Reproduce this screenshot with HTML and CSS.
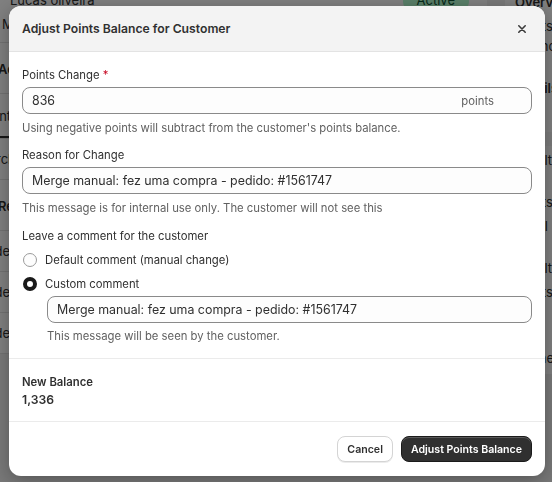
FILE: index.html
```html
<!DOCTYPE html>
<html lang="en">
<head>
  <meta charset="UTF-8">
  <meta name="viewport" content="width=device-width, initial-scale=1.0">
  <title>Adjust Points Balance</title>
  <link rel="stylesheet" href="styles.css">
</head>
<body>

<div class="page">
  <main class="main-col">
    <div class="card customer-card">
      <div class="customer-head">
        <div class="customer-name">Lucas oliveira <span class="badge">Active</span></div>
        <div class="customer-sub">Member since 2023</div>
      </div>
      <div class="row row-strong">Activity</div>
      <div class="tabs"><span class="tab tab-on">Points</span><span class="tab">Orders</span></div>
      <div class="row">Purchase in store</div>
      <div class="row row-strong">Reward</div>
      <div class="row">Order</div>
      <div class="row">Order</div>
      <div class="row">Order</div>
    </div>
  </main>

  <aside class="side-col">
    <div class="card side-card">
      <div class="side-title">Overview</div>
      <div class="side-line">Points balance</div>
      <div class="side-title side-gap">Details</div>
      <div class="side-line">Tier</div>
      <div class="side-band"></div>
      <div class="side-line">Loyalty</div>
      <div class="side-line side-gap">Points</div>
      <div class="side-line">Email</div>
      <div class="side-line side-gap">Loyalty</div>
      <div class="side-line">Points</div>
      <div class="side-line side-gap">Tier</div>
      <div class="side-line">Phone</div>
    </div>
  </aside>
</div>

<div class="backdrop"></div>

<div class="modal">
  <div class="modal-header">
    <h2 class="modal-title">Adjust Points Balance for Customer</h2>
    <button class="close-btn" aria-label="Close">
      <svg width="12" height="12" viewBox="0 0 12 12"><path d="M2.8 2.8l6.4 6.4M9.2 2.8l-6.4 6.4" stroke="#3a3a3a" stroke-width="1.6" stroke-linecap="round"/></svg>
    </button>
  </div>

  <div class="modal-body">
    <div class="field">
      <label class="field-label">Points Change <span class="req">*</span></label>
      <div class="input has-suffix">
        <span class="input-value">836</span>
        <span class="input-suffix">points</span>
      </div>
      <p class="help">Using negative points will subtract from the customer's points balance.</p>
    </div>

    <div class="field">
      <label class="field-label">Reason for Change</label>
      <div class="input"><span class="input-value">Merge manual: fez uma compra - pedido: #1561747</span></div>
      <p class="help">This message is for internal use only. The customer will not see this</p>
    </div>

    <div class="field">
      <label class="field-label">Leave a comment for the customer</label>
      <div class="radio-row">
        <span class="radio"></span>
        <span>Default comment (manual change)</span>
      </div>
      <div class="radio-row">
        <span class="radio radio-on"></span>
        <span>Custom comment</span>
      </div>
      <div class="nested">
        <div class="input"><span class="input-value">Merge manual: fez uma compra - pedido: #1561747</span></div>
        <p class="help help-tight">This message will be seen by the customer.</p>
      </div>
    </div>
  </div>

  <div class="modal-section">
    <div class="balance-label">New Balance</div>
    <div class="balance-value">1,336</div>
  </div>

  <div class="modal-footer">
    <button class="btn">Cancel</button>
    <button class="btn btn-primary">Adjust Points Balance</button>
  </div>
</div>

</body>
</html>
```

FILE: styles.css
```css
body {
  margin: 0;
  background-color: #f1f1f1;
  font-family: Inter, "Noto Sans", sans-serif;
  font-size: 11.3px;
  color: #303030;
  overflow: hidden;
  height: 482px;
}

/* page behind the dialog */
.page {
  display: grid;
  grid-template-columns: 487px 1fr;
  gap: 18px;
  margin-top: -14px;
  font-size: 13px;
}

.card {
  background-color: #fff;
}

.customer-card {
  margin-left: -20px;
}

.customer-head {
  padding: 4px 8px 8px 22px;
  border-bottom: 1px solid #e3e3e3;
}

.customer-name {
  display: flex;
  justify-content: space-between;
  padding-left: 8px;
  line-height: 20px;
}

.badge {
  background-color: #b4fed2;
  color: #0c5132;
  border-radius: 8px;
  padding: 0 14px;
  margin-right: 10px;
}

.customer-sub {
  line-height: 20px;
  margin-top: 4px;
}

.row {
  line-height: 20px;
  padding: 10px 0;
  border-bottom: 1px solid #e3e3e3;
}

.row-strong {
  font-weight: 600;
  padding: 16px 0 14px 18px;
}

.tabs {
  display: flex;
  gap: 20px;
  border-bottom: 1px solid #e3e3e3;
}

.tab {
  line-height: 20px;
  padding: 12px 0 10px;
}

.tab-on {
  border-bottom: 2px solid #303030;
}

.side-card {
  padding: 6px 10px;
}

.side-title {
  font-weight: 600;
  line-height: 20px;
}

.side-line {
  line-height: 20px;
  margin-top: 4px;
}

.side-gap {
  margin-top: 22px;
}

.side-band {
  height: 14px;
  background-color: #f7f7f7;
  margin: 10px -10px 0;
}

.backdrop {
  position: fixed;
  inset: 0;
  background-color: rgba(0, 0, 0, 0.5);
}

/* dialog */
.modal {
  position: fixed;
  top: 6px;
  left: 9px;
  width: 536px;
  background-color: #fff;
  border-radius: 12px;
  overflow: hidden;
  box-shadow: 0 4px 18px rgba(0, 0, 0, 0.3);
}

.modal-header {
  display: flex;
  align-items: center;
  justify-content: space-between;
  height: 45px;
  padding: 0 13px;
  background-color: #f3f3f3;
  border-bottom: 1px solid #e3e3e3;
}

.modal-title {
  margin: 0;
  font-size: 12.2px;
  font-weight: 600;
  color: #303030;
}

.close-btn {
  display: flex;
  align-items: center;
  justify-content: center;
  width: 24px;
  height: 24px;
  margin-right: -2px;
  padding: 0;
  border: none;
  background: none;
}

.modal-body {
  padding: 15px 13px 14px;
  border-bottom: 1px solid #ebebeb;
}

.field + .field {
  margin-top: 11px;
}

.field:last-child {
  margin-top: 12px;
}

.field-label {
  display: block;
  line-height: 16px;
  margin-bottom: 4px;
}

.req {
  color: #c70a24;
}

.input {
  display: flex;
  align-items: center;
  justify-content: space-between;
  height: 25px;
  padding: 0 9px;
  border: 1px solid #8a8a8a;
  border-radius: 8px;
  background-color: #fdfdfd;
}

.input-value {
  font-size: 12.4px;
}

.has-suffix {
  padding-right: 37px;
}

.input-suffix {
  color: #616161;
}

.help {
  margin: 6px 0 0;
  line-height: 16px;
  color: #616161;
}

.help-tight {
  margin-top: 5px;
}

.radio-row {
  display: flex;
  align-items: center;
  gap: 8px;
  line-height: 16px;
  margin-top: 8px;
  padding-left: 1px;
}

.radio {
  box-sizing: border-box;
  width: 14px;
  height: 14px;
  border: 1px solid #9a9a9a;
  border-radius: 50%;
  background-color: #fdfdfd;
}

.radio-on {
  border: 4px solid #1a1a1a;
  background-color: #fff;
}

.nested {
  margin-top: 4px;
  padding-left: 25px;
}

.modal-section {
  padding: 15px 13px 13px;
  border-bottom: 1px solid #ebebeb;
  font-weight: 600;
}

.balance-label {
  line-height: 16px;
}

.balance-value {
  line-height: 16px;
  margin-top: 2px;
  font-size: 12.2px;
}

.modal-footer {
  display: flex;
  justify-content: flex-end;
  gap: 8px;
  padding: 14px 13px 14px;
}

.btn {
  height: 26px;
  padding: 0 9px;
  font-family: inherit;
  font-size: 10.6px;
  font-weight: 600;
  color: #303030;
  background-color: #fff;
  border: 1px solid #d4d4d4;
  border-radius: 8px;
  box-shadow: 0 1px 0 rgba(0, 0, 0, 0.08);
}

.btn-primary {
  color: #fff;
  background-color: #303030;
  border-color: #1a1a1a;
  box-shadow: inset 0 1px 0 rgba(255, 255, 255, 0.2);
}
```
